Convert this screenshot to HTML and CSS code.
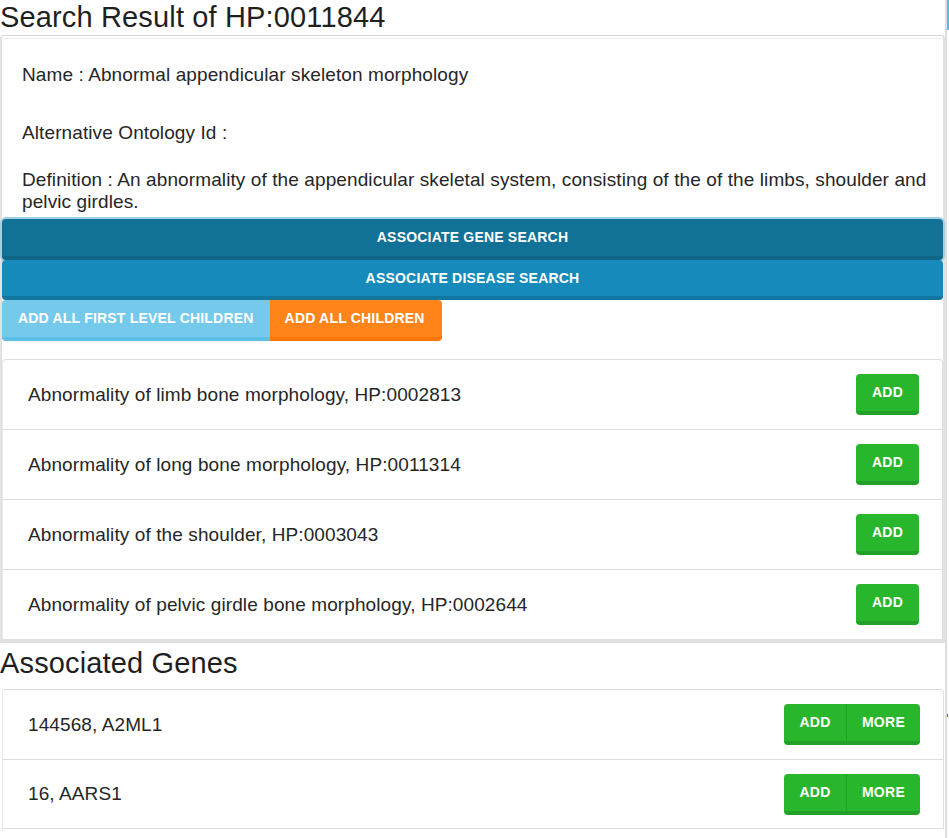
FILE: index.html
```html
<!DOCTYPE html>
<html>
<head>
<meta charset="utf-8">
<link rel="stylesheet" href="styles.css">
</head>
<body>
<div class="page">
  <span class="edge-mark"></span>
  <span class="edge-dot"></span>
  <h3 class="title">Search Result of HP:0011844</h3>
  <div class="panel">
    <div class="info">
      <p class="field name">Name : Abnormal appendicular skeleton morphology</p>
      <p class="field alt">Alternative Ontology Id :</p>
      <p class="field def">Definition : An abnormality of the appendicular skeletal system, consisting of the of the limbs, shoulder and pelvic girdles.</p>
    </div>
    <button class="btn btn-block btn-gene">Associate Gene Search</button>
    <button class="btn btn-block btn-disease">Associate Disease Search</button>
    <div class="btn-row">
      <button class="btn btn-info">Add all first level children</button><button class="btn btn-warning">Add all children</button>
    </div>
    <ul class="list-group children">
      <li class="list-item"><span>Abnormality of limb bone morphology, HP:0002813</span><button class="btn btn-success btn-single">Add</button></li>
      <li class="list-item"><span>Abnormality of long bone morphology, HP:0011314</span><button class="btn btn-success btn-single">Add</button></li>
      <li class="list-item"><span>Abnormality of the shoulder, HP:0003043</span><button class="btn btn-success btn-single">Add</button></li>
      <li class="list-item"><span>Abnormality of pelvic girdle bone morphology, HP:0002644</span><button class="btn btn-success btn-single">Add</button></li>
    </ul>
  </div>
  <h3 class="title genes-title">Associated Genes</h3>
  <ul class="list-group genes">
    <li class="list-item"><span>144568, A2ML1</span><span class="pair"><button class="btn btn-success pair-left">Add</button><button class="btn btn-success pair-right">More</button></span></li>
    <li class="list-item"><span>16, AARS1</span><span class="pair"><button class="btn btn-success pair-left">Add</button><button class="btn btn-success pair-right">More</button></span></li>
  </ul>
</div>
</body>
</html>
```

FILE: styles.css
```css
html, body {
  margin: 0;
  padding: 0;
  background: #fff;
}
body {
  font-family: "Liberation Sans", Arial, sans-serif;
  color: #262626;
  overflow: hidden;
}
.page {
  position: relative;
  width: 945px;
  height: 838px;
  border-right: 2px solid #dedede;
}
.edge-mark {
  position: absolute;
  top: 0;
  right: -4px;
  width: 2px;
  height: 30px;
  background: #54bbe6;
}
.edge-dot {
  position: absolute;
  top: 714px;
  right: -3px;
  width: 1px;
  height: 3px;
  background: #6a4fd8;
}
.title {
  margin: 0;
  font-size: 29px;
  font-weight: normal;
  letter-spacing: 0.15px;
  line-height: 35px;
  color: #1f1f1f;
}
.panel {
  border: 1px solid #d8d8d8;
  border-left: 2px solid #e2e2e2;
  border-right: 2px solid #e2e2e2;
  border-bottom: 0;
  border-radius: 4px 4px 0 0;
  box-shadow: inset 0 2px 0 #fff, inset 0 3px 0 #ececec;
}
.info {
  padding: 28px 15px 3px 20px;
}
.field {
  margin: 0;
  font-size: 19px;
  letter-spacing: 0.1px;
  line-height: 22px;
}
.name { margin-bottom: 36px; }
.alt { margin-bottom: 25px; }

.btn {
  font-family: "Liberation Sans", Arial, sans-serif;
  font-size: 14px;
  font-weight: bold;
  letter-spacing: 0.3px;
  text-transform: uppercase;
  color: #fff;
  border: 0;
  border-bottom: 4px solid transparent;
  height: 41px;
  line-height: 37px;
  padding: 0 16px;
  margin: 0;
  cursor: pointer;
}
.btn-block {
  display: block;
  width: 100%;
  border-radius: 4px;
  letter-spacing: 0.2px;
}
.btn-gene {
  background: #117196;
  border-bottom-color: #0f6686;
  box-shadow: 0 0 0 2px #a3d1e3;
  margin-top: 3px;
}
.btn-disease {
  position: relative;
  height: 40px;
  line-height: 36px;
  background: #168bbb;
  border-bottom-color: #12769f;
}
.btn-row {
  display: flex;
}
.btn-info {
  letter-spacing: 0.2px;
  background: #75c9eb;
  border-bottom-color: #5ebfe6;
  border-radius: 4px 0 0 4px;
}
.btn-warning {
  letter-spacing: 0.2px;
  padding: 0 17px 0 15px;
  background: #ff851b;
  border-bottom-color: #ff7602;
  border-radius: 0 4px 4px 0;
}
.btn-success {
  background: #28b62c;
  border-bottom-color: #23a027;
}
.btn-single {
  border-radius: 4px;
  width: 63px;
  padding: 0;
}

.list-group {
  list-style: none;
  margin: 0;
  padding: 0;
}
.children {
  margin-top: 18px;
  border-bottom: 4px solid #e0e0e0;
}
.list-item {
  display: flex;
  align-items: center;
  justify-content: space-between;
  box-sizing: border-box;
  height: 70px;
  padding: 0 23px 0 25px;
  border-top: 1px solid #dedede;
  border-left: 1px solid #e8e8e8;
  border-right: 1px solid #e0e0e0;
  font-size: 19px;
  letter-spacing: 0.1px;
  line-height: 22px;
}
.children .list-item:first-child {
  border-radius: 4px 4px 0 0;
}
.genes-title {
  margin-top: 2px;
  margin-bottom: 8px;
  line-height: 36px;
}
.genes {
  margin-left: 2px;
  margin-right: 1px;
}
.genes .list-item {
  padding-right: 23px;
}
.genes .list-item:first-child {
  border-radius: 4px 4px 0 0;
  border-top-color: #dadada;
}
.genes .list-item:last-child {
  border-bottom: 1px solid #dedede;
}
.pair {
  display: flex;
}
.pair-left {
  width: 63px;
  padding: 0;
  border-radius: 4px 0 0 4px;
  border-right: 1px solid #23a027;
}
.pair-right {
  width: 73px;
  padding: 0;
  border-radius: 0 4px 4px 0;
}
```
